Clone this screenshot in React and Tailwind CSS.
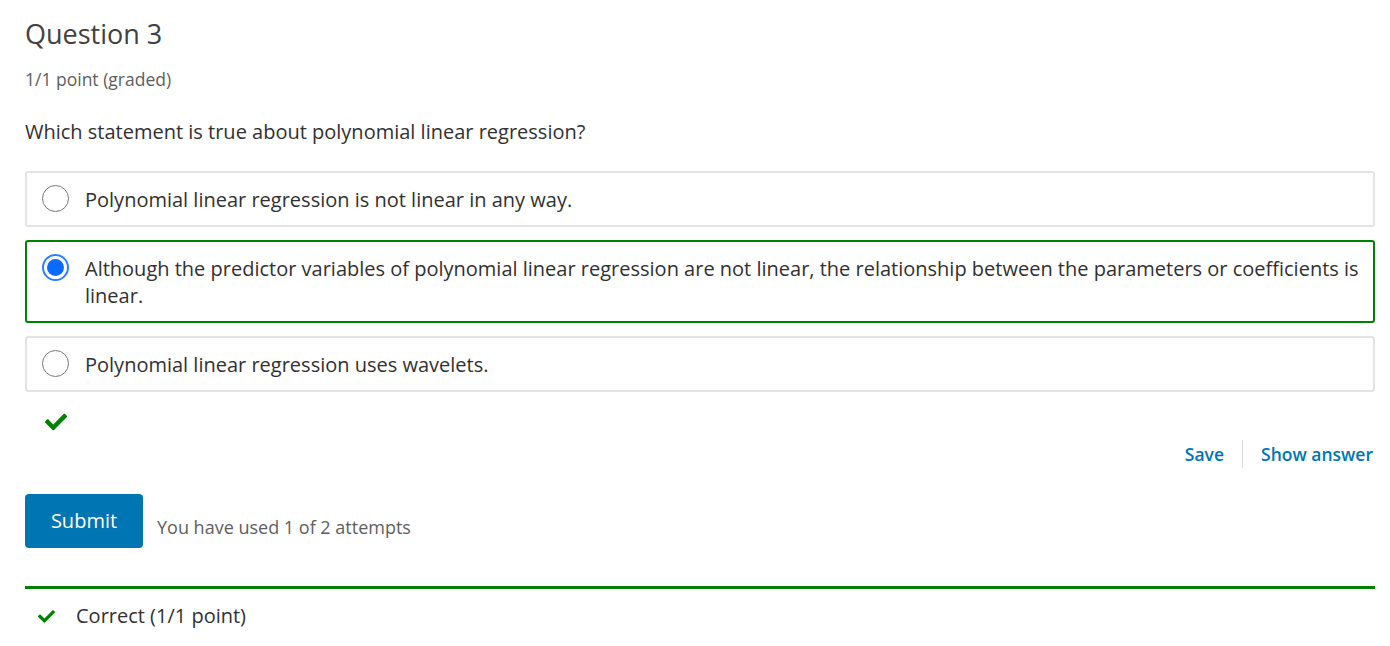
import { FaCheck } from 'react-icons/fa';

const options = [
  { id: 1, text: 'Polynomial linear regression is not linear in any way.', selected: false },
  {
    id: 2,
    text: 'Although the predictor variables of polynomial linear regression are not linear, the relationship between the parameters or coefficients is linear.',
    selected: true
  },
  { id: 3, text: 'Polynomial linear regression uses wavelets.', selected: false }
];

const Radio = ({ checked }) =>
  checked ? (
    <span className="-mt-[1px] flex h-[27px] w-[27px] shrink-0 items-center justify-center rounded-full border-2 border-[#2a7fff] bg-white">
      <span className="h-[17px] w-[17px] rounded-full bg-[#0a6cff]" />
    </span>
  ) : (
    <span className="-mt-[1px] h-[27px] w-[27px] shrink-0 rounded-full border border-[#767676] bg-white" />
  );

export default function App() {
  return (
    <div className="bg-white pl-[25px] pr-[15px] pt-[16px] text-[#313131]" style={{ fontFamily: '"Open Sans", "Liberation Sans", sans-serif' }}>
      <h3 className="text-[27px] leading-[36px] text-[#414141]">Question 3</h3>
      <div className="mt-[14px] text-[17.5px] leading-[26px] text-[#5e5e5e]">1/1 point (graded)</div>
      <p className="mt-[25px] text-[20px] leading-[30px]">Which statement is true about polynomial linear regression?</p>

      <div className="mt-[24px] flex flex-col gap-[13px]">
        {options.map(opt => (
          <label
            key={opt.id}
            className={`flex items-start gap-[16px] rounded-[3px] border-2 pb-[12px] pl-[15px] pr-[14px] pt-[13px] ${opt.selected ? 'border-[#008100]' : 'border-[#e4e4e4]'}`}
          >
            <Radio checked={opt.selected} />
            <span className="text-[20px] leading-[27px]">{opt.text}</span>
          </label>
        ))}
      </div>

      <div className="ml-[20px] mt-[19px] h-[22px] text-[#008100]">
        <FaCheck className="h-[22px] w-[22px]" />
      </div>

      <div className="mt-[7px] flex items-center justify-end pr-[2px]">
        <button className="text-[17.5px] font-semibold leading-[28px] text-[#0075b4]">Save</button>
        <span className="mx-[18px] h-[28px] w-px bg-[#d9d9d9]" />
        <button className="text-[17.5px] font-semibold leading-[28px] text-[#0075b4]">Show answer</button>
      </div>

      <div className="mt-[26px] flex items-center gap-[14px]">
        <button className="h-[54px] w-[118px] rounded-[4px] bg-[#0075b4] text-[20px] text-white">Submit</button>
        <span className="mt-[12px] text-[18px] leading-[27px] text-[#5e5e5e]">You have used 1 of 2 attempts</span>
      </div>

      <div className="mt-[38px] border-t-[3px] border-[#008100]" />
      <div className="mt-[12px] flex items-center gap-[21px] pl-[13px]">
        <FaCheck className="h-[17px] w-[17px] text-[#008100]" />
        <span className="text-[20px] leading-[30px]">Correct (1/1 point)</span>
      </div>
    </div>
  );
}
